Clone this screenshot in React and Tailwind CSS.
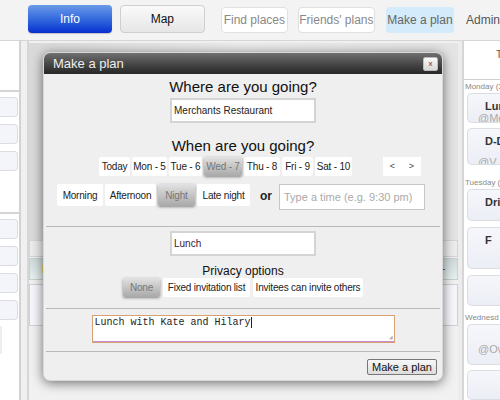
import React from 'react';

const days = [
  ['Today', 'w-[31px]'],
  ['Mon - 5', 'w-[35px]'],
  ['Tue - 6', 'w-[33px]'],
  ['Wed - 7', 'w-[38px]'],
  ['Thu - 8', 'w-[36px]'],
  ['Fri - 9', 'w-[31px]'],
  ['Sat - 10', 'w-[37px]'],
];
const times = [
  ['Morning', 'w-[46px]'],
  ['Afternoon', 'w-[51px]'],
  ['Night', 'w-[37px]'],
  ['Late night', 'w-[53px]'],
];

const Opt = ({ label, active, className = '' }) => (
  <div
    className={
      'flex items-center justify-center whitespace-nowrap text-[10px] tracking-[-0.2px] rounded-[2px] ' +
      (active
        ? 'bg-gradient-to-b from-[#e2e2e2] to-[#a9a9a9] text-[#777] shadow-[0_1px_3px_rgba(0,0,0,0.45)]'
        : 'bg-white text-[#222]') +
      ' ' + className
    }
  >
    {label}
  </div>
);

const SideBtn = () => (
  <div className="h-[20px] w-[18px] rounded-r-[4px] border border-l-0 border-[#dcdde3] bg-[#f4f5fa]" />
);

const Card = ({ h, title, sub, subTop }) => (
  <div className={`ml-[3px] ${h} rounded-l-[5px] border border-r-0 border-[#dcdde3] bg-gradient-to-b from-[#f6f7fb] to-[#eceef6] relative text-[11px] overflow-hidden`}>
    {title && <div className="absolute left-[17px] top-[4px] font-bold text-[#333] whitespace-nowrap">{title}</div>}
    {sub && <div className={`absolute left-[10px] ${subTop} text-[#aaa] whitespace-nowrap`}>{sub}</div>}
  </div>
);

const App = () => {
  return (
    <div className="relative w-[500px] h-[400px] overflow-hidden bg-[#f3f3f3] font-['Liberation_Sans',Arial,sans-serif]">
      {/* nav */}
      <div className="h-[41px] flex items-start pt-[5px] border-b border-[#d6d6d6] text-[12px]">
        <div className="ml-[28px] w-[85px] h-[28px] rounded-[4px] bg-gradient-to-b from-[#6a9ae8] to-[#0a2bcf] text-white flex items-center justify-center shadow-[0_1px_1px_rgba(0,0,0,0.2)]">Info</div>
        <div className="ml-[8px] w-[86px] h-[28px] rounded-[4px] border border-[#cfcfcf] bg-gradient-to-b from-[#fafafa] to-[#e6e6e6] text-[#111] flex items-center justify-center">Map</div>
        <div className="ml-[16px] mt-[2px] w-[68px] h-[26px] rounded-[4px] border border-[#e0e0e0] bg-white text-[#888] flex items-center justify-center whitespace-nowrap">Find places</div>
        <div className="ml-[10px] mt-[2px] w-[78px] h-[26px] rounded-[4px] border border-[#e0e0e0] bg-white text-[#888] flex items-center justify-center whitespace-nowrap">Friends' plans</div>
        <div className="ml-[11px] mt-[2px] w-[69px] h-[26px] rounded-[4px] bg-[#d3ebfb] text-[#666] flex items-center justify-center whitespace-nowrap">Make a plan</div>
        <div className="ml-[12px] mt-[2px] h-[26px] text-[#555] flex items-center">Admin</div>
      </div>

      {/* body */}
      <div className="flex h-[359px]">
        <div className="w-[21px] bg-white border-r-2 border-[#d2d2d2] flex flex-col">
          <div className="h-[51px] border-b-2 border-[#d4d4d4]" />
          <div className="mt-[5px] flex flex-col gap-[7px]">
            <SideBtn /><SideBtn /><SideBtn />
          </div>
          <div className="mt-[41px] border-t-2 border-[#d4d4d4]" />
          <div className="mt-[5px] flex flex-col gap-[7px]">
            <SideBtn /><SideBtn /><SideBtn /><SideBtn />
          </div>
          <div className="mt-[6px] h-[28px] w-[2px] bg-[#eee]" />
        </div>
        <div className="w-[6px] bg-[#f0f0f0]" />
        <div className="w-[431px] border-l-2 border-[#d6d6d6] bg-[#f1f1f1] flex flex-col">
          <div className="h-[197px] mt-[2px] bg-gradient-to-r from-[#dadada] via-[#ececec] to-[#e4e4e4]" />
          <div className="h-[17px] border border-[#d4d4d4] bg-[#ececec]" />
          <div className="h-[22px] mt-[1px] border border-[#c9d0d0] bg-gradient-to-b from-[#cfdada] to-[#e8f0f0] flex items-center justify-between px-[12px]">
            <span className="w-[3px] h-[8px] bg-[#e8d870]" />
            <span className="text-[#3050c0] text-[10px]">+</span>
          </div>
          <div className="h-[42px] mt-[4px] border border-[#cfcfd8] bg-[#f6f6fb]" />
        </div>
        <div className="w-[4px] bg-[#ececec]" />
        <div className="flex-1 bg-white border-l-2 border-[#d6d6d6] flex flex-col overflow-hidden">
          <div className="h-[42px] border-b border-[#d0d0d0] relative">
            <span className="absolute left-[32px] top-[6px] text-[10px] text-[#555]">T</span>
          </div>
          <div className="text-[8px] text-[#888] pl-[1px] mt-[1px] whitespace-nowrap">Monday (3</div>
          <Card h="h-[32px]" title="Lun" sub="@Me" subTop="top-[16px]" />
          <div className="h-[5px] shrink-0" />
          <Card h="h-[40px]" title="D-Day" sub="@V" subTop="top-[25px]" />
          <div className="text-[8px] text-[#888] pl-[1px] mt-[12px] whitespace-nowrap">Tuesday (</div>
          <Card h="h-[35px]" title="Dri" />
          <div className="h-[6px] shrink-0" />
          <Card h="h-[45px]" title="F" />
          <div className="h-[6px] shrink-0" />
          <Card h="h-[34px]" />
          <div className="text-[8px] text-[#888] pl-[1px] mt-[6px] whitespace-nowrap">Wednesd</div>
          <Card h="h-[44px]" sub="@Owe" subTop="top-[16px]" />
          <div className="h-[5px] shrink-0" />
          <Card h="h-[30px] shrink-0" />
        </div>
      </div>

      {/* modal */}
      <div className="absolute left-[43px] top-[52px] w-[400px] h-[329px] rounded-[7px] bg-[#efefef] border border-[#d8d8d8] shadow-[0_2px_12px_rgba(0,0,0,0.55)] flex flex-col overflow-hidden">
        <div className="h-[21px] shrink-0 bg-gradient-to-b from-[#707070] to-[#262626] flex items-center justify-between pl-[9px] pr-[4px]">
          <span className="text-[13px] text-[#eee]">Make a plan</span>
          <div className="w-[15px] h-[14px] rounded-[2px] border border-[#bbb] bg-gradient-to-b from-[#fafafa] to-[#d8d8d8] flex items-center justify-center text-[8px] leading-none text-[#822]">x</div>
        </div>

        <div className="mt-[4px] text-center text-[15px] leading-[18px] text-[#111]">Where are you going?</div>
        <div className="mt-[2px] mx-auto w-[146px] h-[25px] bg-white border-2 border-[#d4d4d4] flex items-center px-[2px] text-[10px] text-[#222]">Merchants Restaurant</div>

        <div className="mt-[14px] text-center text-[15px] leading-[18px] text-[#111]">When are you going?</div>
        <div className="mt-[2px] flex h-[19px] pl-[55px]">
          <div className="flex gap-[2px]">
            {days.map(([d, w]) => (
              <Opt key={d} label={d} active={d === 'Wed - 7'} className={w} />
            ))}
          </div>
          <div className="ml-[31px] w-[38px] bg-white flex items-center justify-around text-[9px] text-[#444]">
            <span>&lt;</span><span>&gt;</span>
          </div>
        </div>
        <div className="mt-[8px] flex items-start pl-[13px]">
          <div className="flex gap-[2px] h-[22px]">
            {times.map(([t, w]) => (
              <Opt key={t} label={t} active={t === 'Night'} className={w} />
            ))}
          </div>
          <span className="ml-[10px] mt-[3px] text-[12px] font-bold text-[#222]">or</span>
          <div className="ml-[7px] w-[146px] h-[26px] bg-white border border-[#c6c6c6] flex items-center px-[4px] text-[11px] text-[#aaa] whitespace-nowrap">Type a time (e.g. 9:30 pm)</div>
        </div>

        <div className="mt-[16px] mx-[2px] border-t border-[#b9b9b9]" />
        <div className="mt-[4px] mx-auto w-[146px] h-[25px] bg-white border-2 border-[#d4d4d4] flex items-center px-[2px] text-[10px] text-[#402040]">Lunch</div>

        <div className="mt-[9px] text-center text-[12px] leading-[13px] text-[#111]">Privacy options</div>
        <div className="mt-[0px] flex justify-center gap-[3px] h-[19px]">
          <Opt label="None" active className="w-[37px]" />
          <Opt label="Fixed invitation list" className="w-[87px]" />
          <Opt label="Invitees can invite others" className="w-[110px]" />
        </div>

        <div className="mt-[11px] mx-[2px] border-t border-[#b9b9b9]" />
        <div className="mt-[6px] mx-auto w-[303px] h-[28px] shrink-0 bg-white border border-[#d9a070] shadow-[inset_0_-1px_0_#c98ad0] px-[2px] text-[10px] leading-[14px] text-[#222] font-['Liberation_Mono',monospace] relative whitespace-nowrap">
          Lunch with Kate and Hilary<span className="inline-block w-[1px] h-[11px] bg-[#222] align-middle" />
          <span className="absolute right-[1px] bottom-[1px] text-[6px] leading-none text-[#aaa]">◢</span>
        </div>
        <div className="mt-[8px] mx-[2px] border-t border-[#b9b9b9]" />
        <div className="mt-[7px] flex justify-end pr-[5px]">
          <div className="h-[16px] px-[4px] rounded-[2px] border border-[#777] bg-gradient-to-b from-[#f8f8f8] to-[#dcdcdc] text-[11px] flex items-center text-[#111] whitespace-nowrap">Make a plan</div>
        </div>
      </div>
    </div>
  );
};

export default App;
